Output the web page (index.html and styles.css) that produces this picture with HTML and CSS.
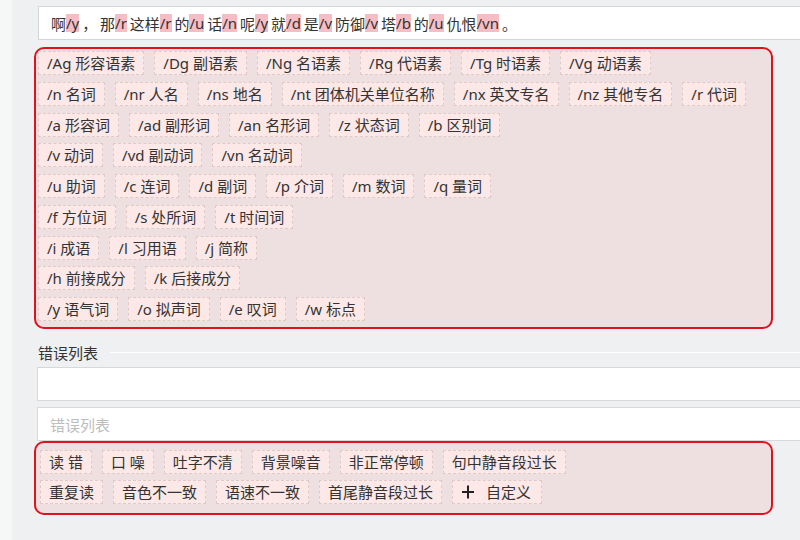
FILE: index.html
```html
<!DOCTYPE html>
<html lang="zh">
<head>
<meta charset="utf-8">
<link rel="stylesheet" href="styles.css">
</head>
<body>
<div class="page">
  <div class="sentence">啊<span class="pos">/y</span> ， 那<span class="pos">/r</span> 这样<span class="pos">/r</span> 的<span class="pos">/u</span> 话<span class="pos">/n</span> 呢<span class="pos">/y</span> 就<span class="pos">/d</span> 是<span class="pos">/v</span> 防御<span class="pos">/v</span> 塔<span class="pos">/b</span> 的<span class="pos">/u</span> 仇恨<span class="pos">/vn</span> 。</div>

  <div class="panel pos-panel">
    <div class="tag-row">
      <span class="tag">/Ag 形容语素</span><span class="tag">/Dg 副语素</span><span class="tag">/Ng 名语素</span><span class="tag">/Rg 代语素</span><span class="tag">/Tg 时语素</span><span class="tag">/Vg 动语素</span>
    </div>
    <div class="tag-row">
      <span class="tag">/n 名词</span><span class="tag">/nr 人名</span><span class="tag">/ns 地名</span><span class="tag">/nt 团体机关单位名称</span><span class="tag">/nx 英文专名</span><span class="tag">/nz 其他专名</span><span class="tag">/r 代词</span>
    </div>
    <div class="tag-row">
      <span class="tag">/a 形容词</span><span class="tag">/ad 副形词</span><span class="tag">/an 名形词</span><span class="tag">/z 状态词</span><span class="tag">/b 区别词</span>
    </div>
    <div class="tag-row">
      <span class="tag">/v 动词</span><span class="tag">/vd 副动词</span><span class="tag">/vn 名动词</span>
    </div>
    <div class="tag-row">
      <span class="tag">/u 助词</span><span class="tag">/c 连词</span><span class="tag">/d 副词</span><span class="tag">/p 介词</span><span class="tag">/m 数词</span><span class="tag">/q 量词</span>
    </div>
    <div class="tag-row">
      <span class="tag">/f 方位词</span><span class="tag">/s 处所词</span><span class="tag">/t 时间词</span>
    </div>
    <div class="tag-row">
      <span class="tag">/i 成语</span><span class="tag">/l 习用语</span><span class="tag">/j 简称</span>
    </div>
    <div class="tag-row">
      <span class="tag">/h 前接成分</span><span class="tag">/k 后接成分</span>
    </div>
    <div class="tag-row">
      <span class="tag">/y 语气词</span><span class="tag">/o 拟声词</span><span class="tag">/e 叹词</span><span class="tag">/w 标点</span>
    </div>
  </div>

  <div class="errors">
    <div class="legend"><span class="legend-text">错误列表</span><span class="legend-line"></span></div>
    <div class="field"></div>
    <div class="field field-second"><span class="placeholder">错误列表</span></div>
  </div>

  <div class="panel err-panel">
    <div class="tag-row">
      <span class="tag">读 错</span><span class="tag">口 噪</span><span class="tag">吐字不清</span><span class="tag">背景噪音</span><span class="tag">非正常停顿</span><span class="tag">句中静音段过长</span>
    </div>
    <div class="tag-row">
      <span class="tag">重复读</span><span class="tag">音色不一致</span><span class="tag">语速不一致</span><span class="tag">首尾静音段过长</span><span class="tag tag-add"><svg class="plus" width="12" height="14" viewBox="0 0 12 14"><path d="M6 0.5V13.5M0 7H12" stroke="#222" stroke-width="2" fill="none"/></svg>自定义</span>
    </div>
  </div>
</div>
</body>
</html>
```

FILE: styles.css
```css
html, body {
  margin: 0;
  padding: 0;
}

body {
  background: #f6f7f7;
  font-family: "Noto Sans", "Noto Sans CJK SC", sans-serif;
  font-size: 15px;
  color: #333;
  overflow: hidden;
  width: 800px;
  height: 540px;
}

.page {
  margin-left: 12px;
  width: 1000px;
  height: 540px;
  box-sizing: border-box;
  background: #eef0f1;
  padding: 6px 0 0 22px;
}

.sentence {
  margin-left: 4px;
  height: 34px;
  box-sizing: border-box;
  border: 1px solid #d3d6d7;
  background: #fff;
  padding: 0 12px;
  display: flex;
  align-items: center;
  white-space: pre;
  word-spacing: -1px;
  color: #333;
}

.pos {
  display: inline-block;
  line-height: 18px;
  background: #f6bdc4;
}

.panel {
  width: 739px;
  box-sizing: border-box;
  border: 2px solid #e0121d;
  border-radius: 10px;
  background: #eedfe0;
  display: flex;
  flex-direction: column;
}

.pos-panel {
  margin-top: 7px;
  padding: 2px 2px 6px 2px;
  row-gap: 6.75px;
}

.err-panel {
  margin-top: 0;
  padding: 7px 4px 9px 4px;
  row-gap: 6px;
}

.tag-row {
  display: flex;
  column-gap: 10px;
}

.tag {
  height: 24px;
  box-sizing: border-box;
  line-height: 22px;
  padding: 0 8px;
  border: 1px dashed #dfcaca;
  background: #fbe8e7;
  color: #333;
  white-space: pre;
}

.tag-add {
  display: flex;
  align-items: center;
  padding-left: 9px;
  padding-right: 10px;
}

.plus {
  margin-right: 12px;
}

.errors {
  margin-top: 15px;
}

.legend {
  display: flex;
  align-items: center;
  height: 18px;
}

.legend-text {
  padding-left: 4px;
  line-height: 18px;
  color: #333;
}

.legend-line {
  flex: 1;
  height: 1px;
  background: #fff;
  margin-left: 12px;
  margin-top: -2px;
}

.field {
  margin-left: 3px;
  margin-top: 5px;
  height: 34px;
  box-sizing: border-box;
  border: 1px solid #d6d9da;
  background: #fff;
  display: flex;
  align-items: center;
  padding-left: 12px;
}

.field-second {
  margin-top: 6px;
}

.placeholder {
  color: #bdbdbd;
}
```
